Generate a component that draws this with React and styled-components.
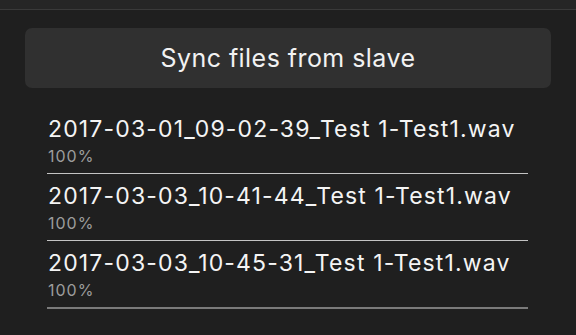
import React from 'react'
import styled, { createGlobalStyle } from 'styled-components'

const GlobalStyle = createGlobalStyle`
  html, body {
    margin: 0;
    padding: 0;
    background: #1f1f1f;
    font-family: Inter, "Noto Sans", sans-serif;
    -webkit-font-smoothing: antialiased;
  }
`

const Page = styled.div`
  width: 576px;
  height: 335px;
  background: #1f1f1f;
  overflow: hidden;
`

const TopBar = styled.div`
  height: 9px;
  background: #262626;
  border-bottom: 1px solid #3a3a3a;
`

const Content = styled.div`
  padding: 18px 25px 0 25px;
`

const SyncButton = styled.button`
  display: flex;
  align-items: center;
  justify-content: center;
  width: 100%;
  height: 60px;
  border: none;
  border-radius: 7px;
  background: #303030;
  color: #f2f2f2;
  font-family: inherit;
  font-size: 25px;
  letter-spacing: 0.45px;
  padding: 0;
`

const FileList = styled.div`
  margin: 19px 23px 0 22px;
`

const Row = styled.div`
  padding: 9px 0 8px 1px;
  border-bottom: ${props => props.last ? '2px solid #7a7a7a' : '1px solid #c4c4c4'};
`

const FileName = styled.div`
  font-size: 23px;
  line-height: 26px;
  letter-spacing: 1.15px;
  color: #f4f4f4;
  white-space: nowrap;
`

const Progress = styled.div`
  margin-top: 5px;
  font-size: 16px;
  line-height: 18px;
  letter-spacing: 1px;
  color: #9c9c9c;
`

const files = [
  { name: '2017-03-01_09-02-39_Test 1-Test1.wav', progress: 100 },
  { name: '2017-03-03_10-41-44_Test 1-Test1.wav', progress: 100 },
  { name: '2017-03-03_10-45-31_Test 1-Test1.wav', progress: 100 }
]

const App = () => {
  return <Page>
    <GlobalStyle />
    <TopBar />
    <Content>
      <SyncButton>Sync files from slave</SyncButton>
      <FileList>
        {files.map((file, index) => {
          return <Row key={index} last={index === files.length - 1}>
            <FileName>{file.name}</FileName>
            <Progress>{file.progress}%</Progress>
          </Row>
        })}
      </FileList>
    </Content>
  </Page>
}

export default App
